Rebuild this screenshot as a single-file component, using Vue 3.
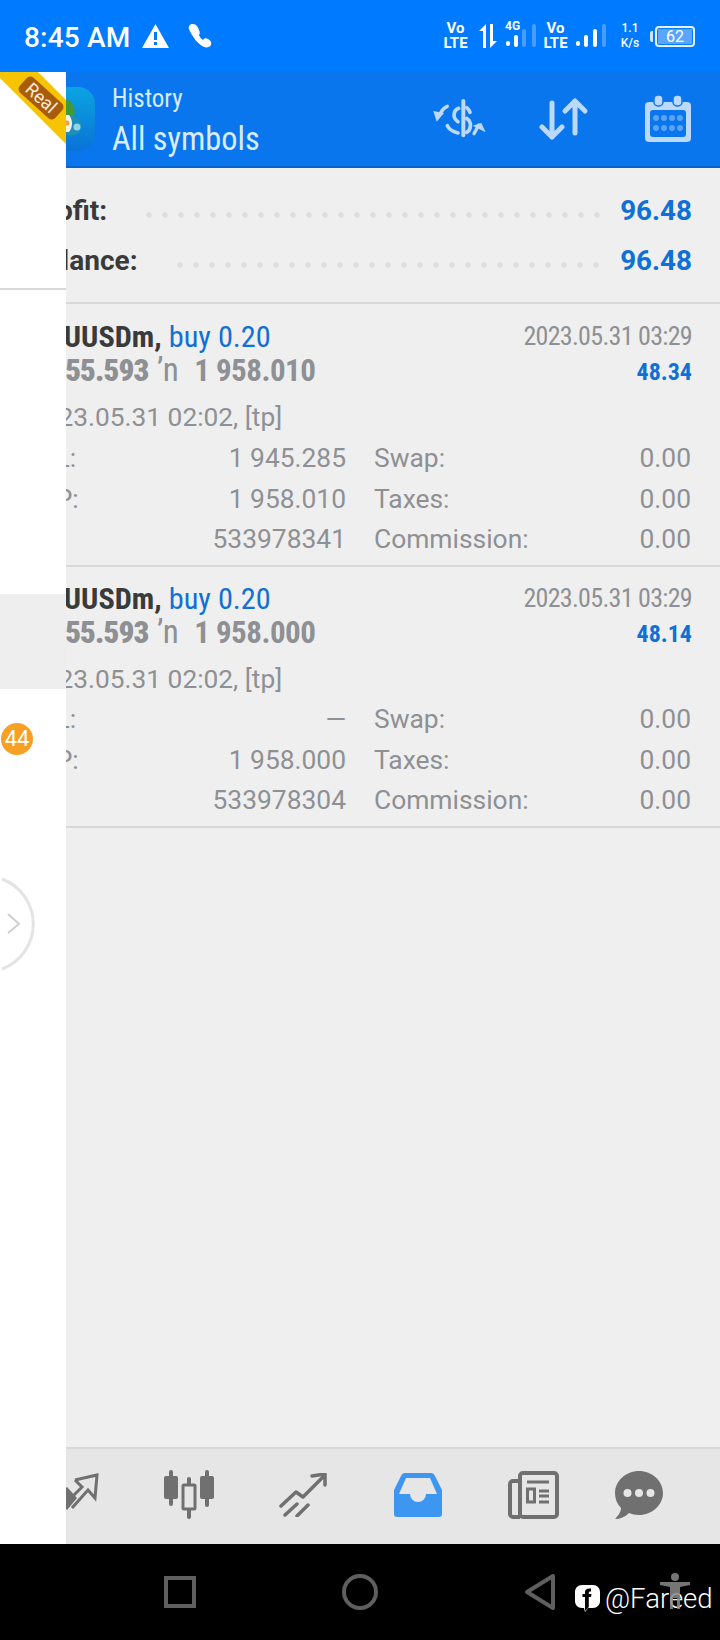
<script setup>
const summary = [
  { label: 'Profit:', value: '96.48' },
  { label: 'Balance:', value: '96.48' }
]

const trades = [
  { close: '1 958.010', profit: '48.34', sl: '1 945.285', tp: '1 958.010', id: '533978341' },
  { close: '1 958.000', profit: '48.14', sl: '—', tp: '1 958.000', id: '533978304' }
]
</script>

<template>
  <div class="phone">
    <div class="status-bar">
      <span class="clock">8:45 AM</span>
      <svg class="st-warn" viewBox="0 0 27 24" width="27" height="24">
        <path d="M13.5 0 27 24H0Z" fill="#fff" />
        <rect x="12" y="8" width="3" height="8" fill="#007aff" />
        <rect x="12" y="18" width="3" height="3" fill="#007aff" />
      </svg>
      <svg class="st-phone" viewBox="0 0 24 26" width="24" height="26">
        <path d="M5 1C2 1 0 3 1 6c1 3 3 6 5 9 2 3 6 7 10 9 3 1 6 0 7-2 1-3-1-5-3-6-2-1-4-1-5 1-2-1-3-3-4-5 1-1 1-3 0-5C10 4 8 1 5 1Z" fill="#fff" />
      </svg>
      <div class="st-right">
        <span class="volte">Vo<br />LTE</span>
        <svg class="st-arrows" viewBox="0 0 18 24" width="18" height="24">
          <path d="M7 0V24H4V7H0Z" fill="#fff" />
          <path d="M11 0V24L18 17H14V0Z" fill="#fff" />
        </svg>
        <div class="sim">
          <span class="sim-tag">4G</span>
          <svg viewBox="0 0 31 24" width="31" height="24">
            <rect x="0" y="17" width="4" height="5" rx="2" fill="#fff" />
            <rect x="8" y="11" width="4" height="12" rx="2" fill="#fff" />
            <rect x="16" y="5" width="4" height="18" rx="2" fill="#4a9dff" />
            <rect x="26" y="0" width="4" height="23" rx="2" fill="#4a9dff" />
          </svg>
        </div>
        <span class="volte">Vo<br />LTE</span>
        <svg class="st-signal" viewBox="0 0 30 24" width="30" height="24">
          <rect x="0" y="17" width="4" height="5" rx="2" fill="#fff" />
          <rect x="8" y="11" width="4" height="12" rx="2" fill="#fff" />
          <rect x="17" y="5" width="4" height="18" rx="2" fill="#fff" />
          <rect x="26" y="0" width="4" height="23" rx="2" fill="#4a9dff" />
        </svg>
        <span class="speed">1.1<br />K/s</span>
        <div class="battery">
          <span class="battery-fill"></span>
          <span class="battery-num">62</span>
        </div>
      </div>
    </div>

    <div class="app">
      <header class="top-bar">
        <svg class="logo" viewBox="0 0 64 64" width="64" height="64">
          <defs>
            <linearGradient id="logoBg" x1="0" y1="0" x2="0" y2="1">
              <stop offset="0" stop-color="#0aa5e0" />
              <stop offset="1" stop-color="#0a72d8" />
            </linearGradient>
          </defs>
          <rect width="64" height="64" rx="17" fill="url(#logoBg)" />
          <path d="M30 14 37 13C43 16 45 24 43 31L34 33Z" fill="#3f9a3a" />
          <path d="M28 30C34 26 44 27 49 34 52 38 50 44 46 47 38 50 30 48 28 44Z" fill="#1f8fb5" />
          <path d="M30 28H38C42 33 42 40 38 45H30Z" fill="#f5f2e6" />
          <circle cx="36" cy="36" r="2.500" fill="#e9a24a" />
          <circle cx="46" cy="40" r="3.500" fill="#8fd4ea" />
        </svg>
        <div class="titles">
          <span class="title-small">History</span>
          <span class="title-big">All symbols</span>
        </div>
        <div class="top-actions">
          <svg class="swap" viewBox="24 24 168 120" width="56" height="42" fill="none" stroke="#bcd8fb" stroke-linecap="round">
            <path d="M118 30V133" stroke-width="12" />
            <path d="M104 52C88 58 84 80 102 92" stroke-width="11" />
            <path d="M128 50C133 54 136 58 138 64" stroke-width="11" />
            <path d="M128 82C144 92 142 116 128 124" stroke-width="11" />
            <path d="M70 104C74 114 86 122 102 126" stroke-width="11" />
            <path d="M70 46C60 50 54 56 50 66" stroke-width="10" />
            <path d="M28 60 60 66 38 92Z" fill="#bcd8fb" stroke="none" />
            <path d="M150 128C156 118 160 110 164 102" stroke-width="10" />
            <path d="M146 104 172 96 185 124Z" fill="#bcd8fb" stroke="none" />
          </svg>
          <svg class="sort" viewBox="0 0 50 44" width="50" height="44" fill="none" stroke="#bcd8fb" stroke-width="5" stroke-linecap="round" stroke-linejoin="round">
            <path d="M13 6V40M3 30 13 40 23 30" />
            <path d="M36 4V36M26 14 36 4 46 14" />
          </svg>
          <svg viewBox="0 0 46 48" width="46" height="48">
            <rect x="0" y="7" width="46" height="40" rx="4" fill="#bcd8fb" />
            <rect x="9" y="0" width="9" height="11" rx="4" fill="#bcd8fb" stroke="#0a76ee" stroke-width="1.5" />
            <rect x="28" y="0" width="9" height="11" rx="4" fill="#bcd8fb" stroke="#0a76ee" stroke-width="1.5" />
            <rect x="5" y="15" width="36" height="27" rx="3" fill="#0a76ee" />
            <g fill="#5ba3f4">
              <circle cx="11" cy="23" r="3" /><circle cx="19" cy="23" r="3" /><circle cx="27" cy="23" r="3" /><circle cx="35" cy="23" r="3" />
              <circle cx="11" cy="33" r="3" /><circle cx="19" cy="33" r="3" /><circle cx="27" cy="33" r="3" /><circle cx="35" cy="33" r="3" />
            </g>
          </svg>
        </div>
      </header>

      <main class="content">
        <section class="summary">
          <div v-for="row in summary" :key="row.label" class="summary-row">
            <span class="summary-label">{{ row.label }}</span>
            <span class="dots"></span>
            <span class="summary-value">{{ row.value }}</span>
          </div>
        </section>

        <article v-for="t in trades" :key="t.id" class="trade">
          <div class="trade-head">
            <span class="symbol">XAUUSDm, <em>buy 0.20</em></span>
            <span class="trade-time">2023.05.31 03:29</span>
          </div>
          <div class="trade-sub">
            <span class="prices"><b>1 955.593</b> <i>’n</i>{{ t.close }}</span>
            <span class="profit">{{ t.profit }}</span>
          </div>
          <div class="open-time">2023.05.31 02:02, [tp]</div>
          <div class="details">
            <div class="cell"><span>S/L:</span><span>{{ t.sl }}</span></div>
            <div class="cell"><span>Swap:</span><span>0.00</span></div>
            <div class="cell"><span>T/P:</span><span>{{ t.tp }}</span></div>
            <div class="cell"><span>Taxes:</span><span>0.00</span></div>
            <div class="cell"><span>ID:</span><span>{{ t.id }}</span></div>
            <div class="cell"><span>Commission:</span><span>0.00</span></div>
          </div>
        </article>
      </main>

      <nav class="tabs">
        <svg viewBox="0 0 60 50" width="60" height="50" fill="none" stroke="#707070" stroke-width="3">
          <path d="M28 10 50 5 48 28 41 20 25 38" />
          <path d="M28 10 35 17 24 28" />
          <path d="M8 28 20 17 30 28 20 40Z" fill="#707070" stroke="none" />
        </svg>
        <svg viewBox="0 0 52 50" width="52" height="50" fill="#707070">
          <rect x="0" y="6" width="14" height="23" rx="2" />
          <rect x="5" y="0" width="4" height="36" rx="2" />
          <rect x="23" y="7" width="4" height="42" rx="2" />
          <rect x="19" y="15" width="12" height="24" rx="1" fill="#e6e6e6" stroke="#707070" stroke-width="3" />
          <rect x="36" y="6" width="14" height="23" rx="2" />
          <rect x="41" y="0" width="4" height="37" rx="2" />
        </svg>
        <svg viewBox="0 0 48 44" width="48" height="44" fill="none" stroke="#707070" stroke-width="3.500" stroke-linecap="round" stroke-linejoin="round">
          <path d="M2 33 17 19 24 24 45 3" />
          <path d="M33 3 46 1 46 12" />
          <path d="M6 42 18 31M18 43 29 32" />
        </svg>
        <svg viewBox="0 0 48 44" width="48" height="44">
          <path d="M11 0H37C39 0 40 1 41 3L48 17V41C48 43 47 44 45 44H3C1 44 0 43 0 41V17L7 3C8 1 9 0 11 0Z" fill="#3d97f0" />
          <path d="M5 21 12 5H36L43 21H32A8 8 0 0 1 16 21Z" fill="#e6e6e6" />
        </svg>
        <svg viewBox="0 0 52 48" width="52" height="48" fill="none" stroke="#707070">
          <rect x="13" y="2" width="37" height="44" rx="3" stroke-width="4" />
          <path d="M13 10H6A3 3 0 0 0 3 13V43A3 3 0 0 0 6 46H13" stroke-width="4" />
          <path d="M20 11H42M32 20H42M32 25H42M32 31H42" stroke-width="3" />
          <rect x="20.500" y="18" width="7" height="13" stroke-width="3" />
        </svg>
        <svg viewBox="0 0 48 48" width="48" height="48">
          <path d="M24 0C37 0 48 10 48 22S37 44 24 44C20 44 17 43 14 42 10 46 5 48 0 48 3 45 6 41 6 37 2 33 0 28 0 22 0 10 11 0 24 0Z" fill="#707070" />
          <g fill="#e6e6e6"><circle cx="12.500" cy="22" r="4" /><circle cx="24" cy="22" r="4" /><circle cx="35.500" cy="22" r="4" /></g>
        </svg>
      </nav>

      <aside class="drawer">
        <div class="drawer-gap"></div>
        <div class="drawer-selected"></div>
        <svg class="ribbon" viewBox="0 0 66 72" width="66" height="72">
          <path d="M0 6V0H38L66 28V72Z" fill="#f6c400" />
        </svg>
        <span class="real">Real</span>
        <span class="badge">44</span>
        <svg class="handle" viewBox="0 0 40 104" width="40" height="104" fill="none">
          <path d="M2 7A48 48 0 0 1 2 97" stroke="#e4e4e4" stroke-width="3" />
          <path d="M8 42 19 52 8 61" stroke="#cfcfcf" stroke-width="2" />
        </svg>
      </aside>
    </div>

    <footer class="sys-nav">
      <span class="sys-square"></span>
      <span class="sys-circle"></span>
      <svg class="sys-back" viewBox="0 0 32 38" width="32" height="38" fill="none">
        <path d="M29 3V35L3 19Z" stroke="#5f5f5f" stroke-width="4" stroke-linejoin="round" />
      </svg>
      <div class="mark">
        <svg viewBox="0 0 25 29" width="25" height="29">
          <path d="M7 1H18C22 1 25 4 25 8V17C25 21 22 24 18 24H13L10 28 9 24H7C3 24 0 21 0 17V8C0 4 3 1 7 1Z" fill="#fff" />
          <path d="M10 27V13H7.500V10H10V8C10 5.500 12 4 16 4.500V7.500C14.500 7.300 13.800 7.800 13.800 9V10H16.500L16 13H13.800V23Z" fill="#000" />
        </svg>
        <span>@Fareed</span>
      </div>
      <svg class="access" viewBox="0 0 32 36" width="32" height="36" fill="#8a8a8a" opacity=".85">
        <circle cx="16" cy="4" r="4" />
        <path d="M1 9H31V12L21 14V36H18V25H14V36H11V14L1 12Z" />
      </svg>
    </footer>
  </div>
</template>

<style>
body {
  background: #000;
}
</style>

<style scoped>
.phone {
  width: 720px;
  height: 1640px;
  display: flex;
  flex-direction: column;
  overflow: hidden;
  font-family: Roboto, "Liberation Sans", sans-serif;
}

/* status bar */
.status-bar {
  height: 72px;
  flex: none;
  display: flex;
  align-items: center;
  padding: 0 25px 0 24px;
  background: #007aff;
  color: #fff;
}

.clock {
  position: relative;
  top: 1px;
  font-size: 28px;
  font-weight: 500;
  letter-spacing: 0.2px;
}

.st-warn {
  margin-left: 11px;
}

.st-phone {
  margin-left: 19px;
}

.st-right {
  margin-left: auto;
  display: flex;
  align-items: center;
}

.volte {
  width: 27px;
  font-size: 15px;
  line-height: 15px;
  font-weight: 700;
  text-align: center;
}

.st-arrows {
  margin: 0 8px 0 10px;
}

.sim {
  position: relative;
  width: 31px;
  margin-right: 6px;
}

.sim svg {
  display: block;
  margin-left: 1px;
}

.sim-tag {
  position: absolute;
  left: 0;
  top: -5px;
  font-size: 12px;
  font-weight: 700;
}

.st-signal {
  margin: 0 14px 0 7px;
}

.speed {
  width: 20px;
  font-size: 12px;
  line-height: 15px;
  font-weight: 500;
  text-align: center;
}

.battery {
  position: relative;
  width: 40px;
  height: 21px;
  margin-left: 15px;
  border: 2px solid #e6f2ff;
  border-radius: 4px;
  box-sizing: border-box;
}

.battery::before {
  content: '';
  position: absolute;
  left: -7px;
  top: 3px;
  width: 3px;
  height: 11px;
  border-radius: 2px 0 0 2px;
  background: #cfe4ff;
}

.battery-fill {
  position: absolute;
  inset: 1px;
  background: #5aa5ff;
}

.battery-num {
  position: absolute;
  inset: 0;
  text-align: center;
  font-size: 16px;
  line-height: 17px;
}

/* app */
.app {
  position: relative;
  flex: 1;
  display: flex;
  flex-direction: column;
  background: #efefef;
}

.top-bar {
  height: 96px;
  flex: none;
  display: flex;
  align-items: center;
  padding: 0 29px 0 31px;
  box-sizing: border-box;
  background: #0a76ee;
  border-bottom: 2px solid #0864cc;
}

.logo {
  flex: none;
}

.titles {
  display: flex;
  flex-direction: column;
  margin-left: 17px;
  padding-top: 4px;
  color: #d8ecff;
  font-stretch: 75%;
}

.title-small {
  font-size: 25px;
  line-height: 36px;
}

.title-big {
  font-size: 32.300px;
  line-height: 44px;
}

.top-actions {
  margin-left: auto;
  display: flex;
  align-items: center;
  gap: 54px;
}

.swap {
  margin-right: -1px;
}

.sort {
  margin: 0 2px 0 -2px;
}

.content {
  flex: 1;
  padding: 0 28px 0 29px;
  color: #8e9094;
}

.summary {
  height: 136px;
  margin: 0 -28px 0 -29px;
  padding: 17px 28px 0 29px;
  box-sizing: border-box;
  border-bottom: 2px solid #d8d8d8;
}

.summary-row {
  display: flex;
  align-items: center;
  height: 50px;
}

.summary-label {
  font-size: 28px;
  font-weight: 700;
  color: #3a3a3a;
}

.dots {
  flex: 1;
  height: 6px;
  margin: 10px 16px 0 34px;
  background: radial-gradient(circle, #dedede 2.400px, transparent 3px) left center / 16px 6px repeat-x;
}

.summary-value {
  font-size: 27.800px;
  font-weight: 700;
  color: #0f70d6;
}

.trade {
  height: 261px;
  margin: 0 -28px 0 -29px;
  padding: 14px 28px 0 29px;
  box-sizing: border-box;
  border-bottom: 2px solid #d8d8d8;
}

.trade:first-of-type {
  height: 263px;
  padding-top: 15px;
}

.trade:first-of-type .details {
  margin-top: 4px;
}

.trade-head,
.trade-sub {
  display: flex;
  justify-content: space-between;
  align-items: center;
  font-stretch: 75%;
}

.trade-head {
  height: 34px;
}

.symbol {
  font-size: 30.300px;
  font-weight: 700;
  color: #3a3a3a;
}

.symbol em {
  font-style: normal;
  font-weight: 400;
  color: #0f70d6;
}

.trade-time {
  font-size: 26px;
  letter-spacing: -0.700px;
}

.trade-sub {
  height: 33px;
}

.prices {
  font-size: 31px;
  font-weight: 700;
  letter-spacing: -0.500px;
  white-space: pre;
}

.prices b {
  letter-spacing: -0.900px;
}

.prices i {
  margin: 0 16px 0 2px;
  font-size: 33px;
  font-style: normal;
  font-weight: 400;
}

.profit {
  position: relative;
  top: 2px;
  font-size: 24px;
  font-weight: 700;
  color: #0f70d6;
}

.open-time {
  margin-top: 14px;
  font-size: 26.300px;
  line-height: 34px;
}

.details {
  display: grid;
  grid-template-columns: 317px 317px;
  column-gap: 28px;
  margin-top: 3px;
}

.cell {
  display: flex;
  justify-content: space-between;
  align-items: center;
  height: 40.500px;
  font-size: 26.400px;
}

.tabs {
  height: 97px;
  flex: none;
  display: grid;
  grid-template-columns: 113px 113px 113px 117px 113px 99px;
  align-items: center;
  justify-items: center;
  padding: 0 0 4px 20.500px;
  box-sizing: border-box;
  background: #e6e6e6;
  border-top: 2px solid #d8d8d8;
}

.drawer {
  position: absolute;
  left: 0;
  top: 0;
  bottom: 0;
  width: 66px;
  background: #fff;
  overflow: hidden;
}

.drawer-gap {
  height: 216px;
  border-bottom: 2px solid #d9d9d9;
}

.drawer-selected {
  height: 95px;
  margin-top: 304px;
  background: #eee;
}

.ribbon {
  position: absolute;
  left: 0;
  top: 0;
}

.real {
  position: absolute;
  left: 17px;
  top: 16px;
  width: 48px;
  height: 20px;
  border-radius: 5px;
  background: #a95c0c;
  color: #ffeeda;
  font-size: 18px;
  line-height: 20px;
  text-align: center;
  transform: rotate(42deg);
}

.badge {
  position: absolute;
  left: 1px;
  top: 651px;
  width: 32px;
  height: 32px;
  border-radius: 50%;
  background: #f7a024;
  color: #fff;
  font-size: 22px;
  line-height: 32px;
  text-align: center;
}

.handle {
  position: absolute;
  left: 0;
  top: 800px;
}

/* android nav */
.sys-nav {
  position: relative;
  height: 96px;
  flex: none;
  background: #000;
}

.sys-square {
  position: absolute;
  left: 164px;
  top: 32px;
  width: 32px;
  height: 32px;
  box-sizing: border-box;
  border: 4px solid #5f5f5f;
}

.sys-circle {
  position: absolute;
  left: 342px;
  top: 30px;
  width: 36px;
  height: 36px;
  box-sizing: border-box;
  border: 4px solid #5f5f5f;
  border-radius: 50%;
}

.sys-back {
  position: absolute;
  left: 524px;
  top: 29px;
}

.mark {
  position: absolute;
  left: 575px;
  top: 38px;
  display: flex;
  align-items: center;
  gap: 5px;
  color: #fff;
  font-size: 27.500px;
  font-weight: 300;
}

.access {
  position: absolute;
  left: 659px;
  top: 29px;
}
</style>
